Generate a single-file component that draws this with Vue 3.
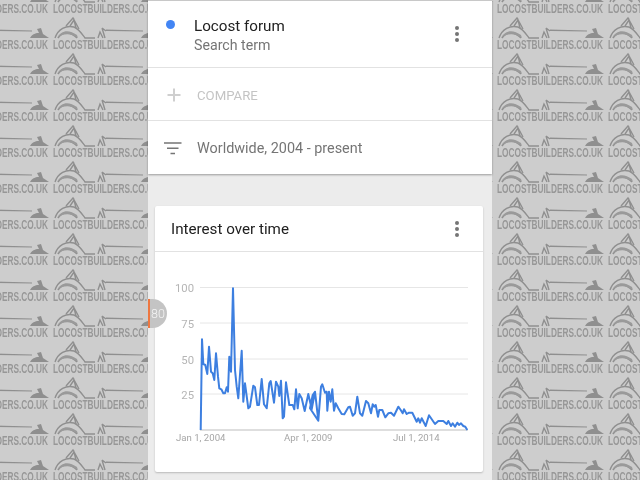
<script setup>
const left = [[182,480],[186,208],[190,282],[196,285],[202,312],[207,230],[213,305],[218,310],[223,330],[228,250],[234,320],[238,355],[244,358],[250,370],[255,370],[260,352],[264,365],[268,260],[273,305],[279,55],[285,300],[290,350],[295,385],[305,242],[310,395],[315,340],[325,415],[330,410],[340,347],[345,352],[352,405],[357,405],[365,327],[372,403],[380,415],[388,340],[392,333],[402,398],[408,335],[415,350],[418,378],[423,332],[428,445],[432,440],[438,337],[448,405],[458,405],[463,418],[468,358],[473,415],[478,372],[485,385],[494,423],[505,372],[515,418],[525,365],[535,452]]
const right = [[0,415],[8,375],[15,365],[25,452],[33,350],[37,343],[45,368],[50,365],[52,422],[57,365],[62,395],[67,358],[72,422],[77,400],[85,415],[95,432],[103,433],[115,412],[120,410],[128,437],[135,430],[142,380],[150,430],[157,437],[168,393],[175,400],[183,430],[188,403],[193,410],[197,405],[204,440],[208,420],[217,420],[226,442],[235,430],[243,428],[252,437],[265,410],[272,420],[278,430],[282,418],[290,432],[297,428],[307,428],[320,455],[325,445],[330,458],[335,445],[347,468],[357,436],[375,462],[385,453],[400,453],[410,462],[415,453],[423,468],[428,460],[435,470],[442,458],[447,465],[453,460],[460,468],[466,470],[472,480]]
const fmt = (ox, pts) => pts.map(([x, y]) => `${(ox + x / 3).toFixed(1)},${(270 + y / 3).toFixed(1)}`).join(' ')
const trend = fmt(140, left) + ' ' + fmt(310, right)
const grid = [
  { y: 287.5, label: '100' },
  { y: 323, label: '75' },
  { y: 359, label: '50' },
  { y: 394, label: '25' }
]
const dates = [
  { x: 176, label: 'Jan 1, 2004' },
  { x: 284, label: 'Apr 1, 2009' },
  { x: 393, label: 'Jul 1, 2014' }
]
</script>

<template>
  <div class="page">
    <svg class="wallpaper" width="640" height="480" aria-hidden="true">
      <defs>
        <pattern id="logo" patternUnits="userSpaceOnUse" x="53" y="14" width="111" height="36">
          <g fill="none" stroke="#8f8f8f" stroke-width="1.4">
            <path d="M2 24C5 15 13 11 21 13C26 15 29 20 32 24L42 24" />
            <path d="M5 24C9 18 17 17 24 24" />
            <path d="M13 12L20 4L26 15M17 12L21 6L23 14" />
            <path d="M45 24L47 18L50 24M49 14L52 24M49 14L53 17" />
          </g>
          <path d="M4 24C8 16 16 15 24 21L25 24C18 19 10 19 4 24Z" fill="#9a9a9a" />
          <path d="M53 15.5L90 16.5L90 17.6L53 17Z" fill="#8f8f8f" />
          <path d="M88 24C91 19 95 19 97 19L95 15L99 14L101 20L107 24Z" fill="#8f8f8f" />
          <text x="0" y="35" class="logo-text" textLength="106" lengthAdjust="spacingAndGlyphs">LOCOSTBUILDERS.CO.UK</text>
        </pattern>
      </defs>
      <rect width="640" height="480" fill="url(#logo)" />
    </svg>

    <main class="column">
      <section class="panel">
        <div class="row term">
          <span class="dot"></span>
          <div class="term-text">
            <div class="term-name">Locost forum</div>
            <div class="term-sub">Search term</div>
          </div>
          <svg class="more" width="6" height="18" viewBox="0 0 6 18">
            <circle cx="3" cy="3" r="2" /><circle cx="3" cy="9" r="2" /><circle cx="3" cy="15" r="2" />
          </svg>
        </div>
        <div class="row compare">
          <svg width="14" height="14" viewBox="0 0 14 14" class="row-icon">
            <path d="M7 0.5V13.5M0.5 7H13.5" stroke="#cfcfcf" stroke-width="2" fill="none" />
          </svg>
          <span class="compare-label">COMPARE</span>
        </div>
        <div class="row filter">
          <svg width="18" height="13" viewBox="0 0 18 13" class="row-icon">
            <path d="M0 1H17.5M3 6.2H14.5M6.5 11.5H11" stroke="#757575" stroke-width="1.6" fill="none" />
          </svg>
          <span class="filter-label">Worldwide, 2004 - present</span>
        </div>
      </section>

      <section class="card">
        <header class="card-head">
          <h2 class="card-title">Interest over time</h2>
          <svg class="more" width="6" height="18" viewBox="0 0 6 18">
            <circle cx="3" cy="3" r="2" /><circle cx="3" cy="9" r="2" /><circle cx="3" cy="15" r="2" />
          </svg>
        </header>
        <svg class="chart" width="328" height="220" viewBox="155 252 328 220">
          <g v-for="g in grid" :key="g.label">
            <line x1="200" x2="468" :y1="g.y" :y2="g.y" stroke="#e6e6e6" stroke-width="1" />
            <text x="194" :y="g.y + 4.5" text-anchor="end" class="axis-y">{{ g.label }}</text>
          </g>
          <line x1="200" x2="468" y1="430" y2="430" stroke="#bdbdbd" stroke-width="1" />
          <polyline :points="trend" fill="none" stroke="#3d7fe0" stroke-width="2" stroke-linejoin="round" />
          <text v-for="d in dates" :key="d.label" :x="d.x" y="441" class="axis-x">{{ d.label }}</text>
        </svg>
      </section>
    </main>

    <div class="badge">80</div>
  </div>
</template>

<style scoped>
.page {
  position: relative;
  width: 640px;
  height: 480px;
  overflow: hidden;
  background: #cdcdcd;
  display: flex;
  justify-content: center;
  font-family: Roboto, "Liberation Sans", sans-serif;
  filter: blur(0.3px);
}
.wallpaper {
  position: absolute;
  left: 0;
  top: 0;
}
.logo-text {
  font-family: "Liberation Sans", sans-serif;
  font-weight: 700;
  font-size: 13.5px;
  fill: #979797;
}
.column {
  position: relative;
  width: 344px;
  height: 480px;
  background: #ececec;
  display: flex;
  flex-direction: column;
}
.panel {
  background: #fff;
  border-top: 1px solid #c8c8c8;
  height: 174px;
  box-shadow: 0 1px 2px rgba(0, 0, 0, 0.35);
  flex: none;
  box-sizing: border-box;
  display: flex;
  flex-direction: column;
}
.row {
  display: flex;
  align-items: center;
  box-sizing: border-box;
}
.term {
  height: 67px;
  border-bottom: 1px solid #e2e2e2;
  padding: 0 32px 0 18px;
  position: relative;
}
.dot {
  width: 9px;
  height: 9px;
  border-radius: 50%;
  background: #4285f4;
  align-self: flex-start;
  margin-top: 19px;
  flex: none;
}
.term-text {
  margin-left: 19px;
  padding-top: 2px;
  flex: 1;
}
.term-name {
  font-size: 15.2px;
  line-height: 20px;
  color: #212121;
}
.term-sub {
  font-size: 14.2px;
  line-height: 18px;
  color: #757575;
}
.more {
  fill: #757575;
  flex: none;
}
.compare {
  height: 53px;
  border-bottom: 1px solid #e2e2e2;
  padding: 2px 0 0 19px;
}
.compare-label {
  margin-left: 16px;
  font-size: 13.2px;
  color: #c4c4c4;
}
.row-icon {
  flex: none;
}
.filter {
  flex: 1;
  padding: 2px 0 0 16px;
}
.filter-label {
  margin-left: 15px;
  font-size: 14.4px;
  color: #757575;
}
.card {
  margin: 32px 9px 0 7px;
  height: 266px;
  background: #fff;
  border-radius: 2px;
  box-shadow: 0 1px 2px rgba(0, 0, 0, 0.22);
  flex: none;
}
.card-head {
  height: 46px;
  box-sizing: border-box;
  border-bottom: 1px solid #e2e2e2;
  padding: 0 23px 0 16px;
  display: flex;
  align-items: center;
  justify-content: space-between;
}
.card-title {
  margin: 0;
  font-size: 15.2px;
  font-weight: 400;
  color: #212121;
}
.chart {
  display: block;
}
.axis-y {
  font-size: 11.3px;
  fill: #b5b5b5;
}
.axis-x {
  font-size: 9.6px;
  fill: #a6a6a6;
}
.badge {
  position: absolute;
  left: 148px;
  top: 299px;
  width: 19px;
  height: 29px;
  box-sizing: border-box;
  border-left: 2px solid #ee7740;
  border-radius: 0 15px 15px 0;
  background: #c4c4c4;
  color: #f4f4f4;
  font-size: 12.5px;
  font-weight: 300;
  line-height: 29px;
  padding-left: 1px;
}
</style>
